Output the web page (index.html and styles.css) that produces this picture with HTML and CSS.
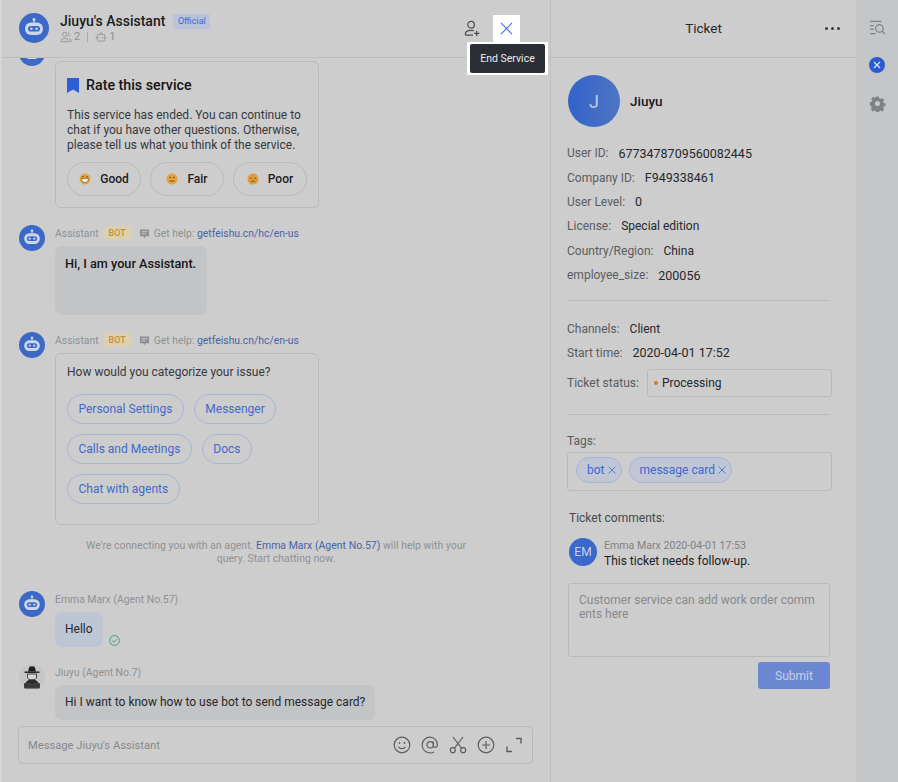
FILE: index.html
```html
<!DOCTYPE html>
<html lang="en">
<head>
  <meta charset="UTF-8">
  <title>Jiuyu's Assistant - Ticket</title>
  <link rel="stylesheet" href="styles.css">
</head>
<body>
  <svg class="defs" width="0" height="0">
    <symbol id="robot" viewBox="0 0 30 30">
      <circle cx="15" cy="15" r="15" fill="#3c69c6"/>
      <circle cx="15" cy="6.600" r="1.500" fill="#cdd6ea"/>
      <rect x="14.400" y="7" width="1.200" height="3" fill="#cdd6ea"/>
      <rect x="6" y="9.500" width="18" height="12.500" rx="6" fill="#cdd6ea"/>
      <rect x="9" y="13" width="12" height="5.600" rx="2.800" fill="#3c69c6"/>
      <circle cx="12.400" cy="15.800" r="1.300" fill="#cdd6ea"/>
      <circle cx="17.600" cy="15.800" r="1.300" fill="#cdd6ea"/>
    </symbol>
    <symbol id="help" viewBox="0 0 12 12">
      <path d="M1 1.500h10v7.500H7.500L6 11 4.500 9H1z" fill="#8f9194"/>
      <path d="M3 4h6M3 6.200h4" stroke="#cdcdcd" stroke-width="1"/>
    </symbol>
  </svg>

  <div class="app">
    <section class="chat">
      <header class="chat-head">
        <svg class="head-avatar"><use href="#robot"/></svg>
        <div class="head-info">
          <div class="head-title">
            <span class="head-name">Jiuyu's Assistant</span>
            <span class="tag-official">Official</span>
          </div>
          <div class="head-sub">
            <svg class="sub-icon" viewBox="0 0 14 14" fill="none" stroke="#8f9194" stroke-width="1">
              <circle cx="5.500" cy="4" r="2.500"/>
              <path d="M1 12.500c0-2.600 2-4 4.500-4s4.500 1.400 4.500 4zM9 1.800a2.400 2.400 0 0 1 0 4.500M10.800 8.800c1.400.5 2.200 1.800 2.200 3.700h-1.500"/>
            </svg>
            <span>2</span>
            <i class="sub-sep"></i>
            <svg class="sub-icon" viewBox="0 0 14 14" fill="none" stroke="#8f9194" stroke-width="1">
              <path d="M7 1v2.500"/>
              <rect x="2.500" y="3.800" width="9" height="8" rx="2"/>
              <path d="M.5 7.800h2M11.500 7.800h2M5 7v1.500M9 7v1.500"/>
            </svg>
            <span>1</span>
          </div>
        </div>
        <div class="head-actions">
          <svg class="add-user" viewBox="0 0 18 18" fill="none" stroke="#4a4c50" stroke-width="1.300">
            <circle cx="7.500" cy="5" r="3.500"/>
            <path d="M1.500 16v-1.500c0-2.200 2-3.500 6-3.500 1 0 2 .1 2.800.3M1.500 16h8M13.500 11.500v5.500M10.800 14.200h5.400"/>
          </svg>
          <span class="end-btn">
            <svg viewBox="0 0 14 14" fill="none" stroke="#3a6fe8" stroke-width="1.100"><path d="M1 1l12 12M13 1L1 13"/></svg>
          </span>
        </div>
        <div class="tooltip"><span>End Service</span></div>
      </header>

      <div class="messages">
        <div class="msg">
          <svg class="msg-avatar"><use href="#robot"/></svg>
          <div class="msg-body">
            <div class="meta"></div>
            <div class="card card-rate">
              <h3 class="card-title">
                <svg class="bookmark" viewBox="0 0 12 15"><path d="M0 0h12v15L6 11.500 0 15z" fill="#2f5fd6"/></svg>
                Rate this service
              </h3>
              <p class="card-text">This service has ended. You can continue to chat if you have other questions. Otherwise, please tell us what you think of the service.</p>
              <div class="rate-btns">
                <button class="rate-btn">
                  <svg class="emoji" viewBox="0 0 12 12"><circle cx="6" cy="6" r="5.500" fill="#e6a23c"/><path d="M2.500 5.500h7C9.500 8 8 9.500 6 9.500S2.500 8 2.500 5.500z" fill="#f4efe6" stroke="#6b4a20" stroke-width=".6"/><path d="M3 3.800h1.800M7.200 3.800H9" stroke="#6b4a20" stroke-width=".9"/></svg>
                  Good
                </button>
                <button class="rate-btn">
                  <svg class="emoji" viewBox="0 0 12 12"><circle cx="6" cy="6" r="5.500" fill="#e6a23c"/><path d="M3.500 8h5" stroke="#6b4a20" stroke-width=".9"/><circle cx="4" cy="4.500" r=".8" fill="#6b4a20"/><circle cx="8" cy="4.500" r=".8" fill="#6b4a20"/></svg>
                  Fair
                </button>
                <button class="rate-btn">
                  <svg class="emoji" viewBox="0 0 12 12"><circle cx="6" cy="6" r="5.500" fill="#e09a3a"/><path d="M4 8.800c1-1 3-1 4 0" fill="none" stroke="#6b4a20" stroke-width=".9"/><path d="M3 5l1.600.5M9 5l-1.600.5" stroke="#6b4a20" stroke-width=".9"/></svg>
                  Poor
                </button>
              </div>
            </div>
          </div>
        </div>

        <div class="msg">
          <svg class="msg-avatar"><use href="#robot"/></svg>
          <div class="msg-body">
            <div class="meta">
              <span>Assistant</span><span class="tag-bot">BOT</span>
              <svg class="help-icon"><use href="#help"/></svg>
              <span>Get help: <span class="meta-link">getfeishu.cn/hc/en-us</span></span>
            </div>
            <div class="bubble bubble-intro">Hi, I am your Assistant.</div>
          </div>
        </div>

        <div class="msg msg-topics">
          <svg class="msg-avatar"><use href="#robot"/></svg>
          <div class="msg-body">
            <div class="meta">
              <span>Assistant</span><span class="tag-bot">BOT</span>
              <svg class="help-icon"><use href="#help"/></svg>
              <span>Get help: <span class="meta-link">getfeishu.cn/hc/en-us</span></span>
            </div>
            <div class="card card-topics">
              <p class="card-text">How would you categorize your issue?</p>
              <div class="pills">
                <span class="pill">Personal Settings</span>
                <span class="pill">Messenger</span>
                <span class="pill">Calls and Meetings</span>
                <span class="pill">Docs</span>
                <span class="pill">Chat with agents</span>
              </div>
            </div>
          </div>
        </div>

        <p class="system-note">We're connecting you with an agent. <span class="meta-link">Emma Marx (Agent No.57)</span> will help with your query. Start chatting now.</p>

        <div class="msg msg-agent">
          <svg class="msg-avatar"><use href="#robot"/></svg>
          <div class="msg-body">
            <div class="meta"><span>Emma Marx (Agent No.57)</span></div>
            <div class="bubble-row">
              <div class="bubble bubble-blue">Hello</div>
              <svg class="read-icon" viewBox="0 0 12 12" fill="none" stroke="#2f9e78" stroke-width="1"><circle cx="6" cy="6" r="5.300"/><path d="M3.400 6l1.900 1.900 3.300-3.400"/></svg>
            </div>
          </div>
        </div>

        <div class="msg msg-user">
          <svg class="msg-avatar" viewBox="0 0 26 26">
            <circle cx="13" cy="13" r="13" fill="#c6c6c6"/>
            <path d="M9 7.500L10.500 2.500h5L17 7.500z" fill="#1d1d1f"/>
            <path d="M5.500 7.500h15v1.400h-15z" fill="#1d1d1f"/>
            <path d="M8.500 10h9v3c0 1.800-2 3-4.500 3s-4.500-1.200-4.500-3z" fill="#d8d8d8" stroke="#1d1d1f" stroke-width=".8"/>
            <path d="M5.500 24.500c0-6 2.500-9 7.500-9s7.500 3 7.500 9z" fill="#2a2a2c"/>
            <rect x="5" y="19" width="16" height="5" rx="1" fill="#3b3b3e"/>
          </svg>
          <div class="msg-body">
            <div class="meta"><span>Jiuyu (Agent No.7)</span></div>
            <div class="bubble">Hi I want to know how to use bot to send message card?</div>
          </div>
        </div>
      </div>

      <div class="composer">
        <span class="composer-hint">Message Jiuyu's Assistant</span>
        <div class="composer-tools">
          <svg viewBox="0 0 18 18" fill="none" stroke="#5c5e62" stroke-width="1.200"><circle cx="9" cy="9" r="7.800"/><path d="M5.500 10.800c1.800 2.400 5.200 2.400 7 0"/><circle cx="6.500" cy="7" r=".9" fill="#5c5e62" stroke="none"/><circle cx="11.500" cy="7" r=".9" fill="#5c5e62" stroke="none"/></svg>
          <svg viewBox="0 0 18 18" fill="none" stroke="#5c5e62" stroke-width="1.200"><circle cx="9.200" cy="8.800" r="3.200"/><path d="M12.400 5.600v4.200c0 2.400 3.800 2.200 4-.6.300-4.400-3-8-7.400-8a7.900 7.900 0 0 0 0 15.800c1.500 0 2.800-.3 4-1"/></svg>
          <svg viewBox="0 0 18 18" fill="none" stroke="#5c5e62" stroke-width="1.200"><circle cx="3.800" cy="14.200" r="2.500"/><circle cx="14.200" cy="14.200" r="2.500"/><path d="M5.300 12.300L14 1M12.700 12.300L4 1"/></svg>
          <svg viewBox="0 0 18 18" fill="none" stroke="#5c5e62" stroke-width="1.200"><circle cx="9" cy="9" r="7.800"/><path d="M9 5v8M5 9h8"/></svg>
          <svg viewBox="0 0 18 18" fill="none" stroke="#5c5e62" stroke-width="1.400"><path d="M11 2.500h5v5M2 10.500v5h5"/></svg>
        </div>
      </div>
    </section>

    <section class="ticket">
      <header class="ticket-head">
        <span class="ticket-title">Ticket</span>
        <span class="ticket-more"><i></i><i></i><i></i></span>
      </header>

      <div class="ticket-body">
        <div class="user-card">
          <span class="user-avatar">J</span>
          <span class="user-name">Jiuyu</span>
        </div>

        <div class="fields">
          <div class="field"><span class="field-label">User ID:</span><span class="field-num">6773478709560082445</span></div>
          <div class="field"><span class="field-label">Company ID:</span><span class="field-num">F949338461</span></div>
          <div class="field"><span class="field-label">User Level:</span><span class="field-num">0</span></div>
          <div class="field"><span class="field-label">License:</span><span>Special edition</span></div>
          <div class="field"><span class="field-label">Country/Region:</span><span>China</span></div>
          <div class="field"><span class="field-label">employee_size:</span><span class="field-num">200056</span></div>
        </div>

        <hr class="divider">

        <div class="fields fields-service">
          <div class="field"><span class="field-label">Channels:</span><span>Client</span></div>
          <div class="field"><span class="field-label">Start time:</span><span class="field-num">2020-04-01 17:52</span></div>
          <div class="field field-status">
            <span class="field-label">Ticket status:</span>
            <span class="status-box"><i class="status-dot"></i>Processing</span>
          </div>
        </div>

        <hr class="divider divider-tags">

        <div class="tags-label">Tags:</div>
        <div class="tags-box">
          <span class="tag">bot<svg viewBox="0 0 8 8" fill="none" stroke="#3f68d0" stroke-width=".8"><path d="M.5.500l7 7M7.500.500l-7 7"/></svg></span>
          <span class="tag">message card<svg viewBox="0 0 8 8" fill="none" stroke="#3f68d0" stroke-width=".8"><path d="M.5.500l7 7M7.500.500l-7 7"/></svg></span>
        </div>

        <div class="comments-label">Ticket comments:</div>
        <div class="comment">
          <span class="comment-avatar">EM</span>
          <div>
            <div class="comment-meta">Emma Marx 2020-04-01 17:53</div>
            <div class="comment-text">This ticket needs follow-up.</div>
          </div>
        </div>

        <div class="comment-input">Customer service can add work order comments here</div>
        <div class="submit-row"><button class="submit">Submit</button></div>
      </div>
    </section>

    <aside class="rail">
      <svg class="rail-icon" viewBox="0 0 18 18" fill="none" stroke="#808285" stroke-width="1.300">
        <path d="M1 2.500h12M1 7h4M1 11h4M1 15.500h6"/>
        <circle cx="11" cy="10" r="4"/>
        <path d="M14 13l3 3"/>
      </svg>
      <span class="rail-close">
        <svg viewBox="0 0 8 8" fill="none" stroke="#dfe6f5" stroke-width="1.200"><path d="M1 1l6 6M7 1L1 7"/></svg>
      </span>
      <svg class="rail-icon" viewBox="0 0 18 18">
        <path fill="#808285" fill-rule="evenodd" d="M7.400.8h3.200l.5 2.300 1.500.7 2-1.200 2.200 2.300-1.200 2 .6 1.500 2.300.5v3.200l-2.300.5-.6 1.500 1.200 2-2.200 2.200-2-1.200-1.500.6-.5 2.300H7.400l-.5-2.300-1.500-.6-2 1.200-2.300-2.200 1.200-2-.6-1.500L-.1 10.600V7.400l2.300-.5.600-1.500-1.200-2 2.300-2.300 2 1.200 1.500-.7zM9 6a3 3 0 1 0 0 6 3 3 0 0 0 0-6z" transform="translate(.9 .9) scale(.9)"/>
      </svg>
    </aside>
  </div>
</body>
</html>
```

FILE: styles.css
```css
/* Reset and base */
* {
  box-sizing: border-box;
  margin: 0;
  padding: 0;
}

html,
body {
  height: 100%;
}

body {
  font-family: Roboto, "Liberation Sans", sans-serif;
  font-size: 12px;
  color: #1e2023;
  background: #cdcdcd;
  overflow: hidden;
}

.defs {
  position: absolute;
}

.app {
  display: flex;
  height: 782px;
  border-left: 2px solid #d6d6d6;
}

/* Chat column */
.chat {
  width: 549px;
  display: flex;
  flex-direction: column;
  border-right: 1px solid #bfbfbf;
}

.chat-head {
  position: relative;
  z-index: 2;
  flex: none;
  height: 58px;
  display: flex;
  align-items: flex-start;
  padding: 13px 30px 0 17px;
  border-bottom: 1px solid #bdbdbd;
  background: #cdcdcd;
}

.head-avatar {
  width: 30px;
  height: 30px;
  flex: none;
}

.head-info {
  margin-left: 11px;
}

.head-title {
  display: flex;
  align-items: center;
  height: 16px;
}

.head-name {
  font-size: 14px;
  font-weight: 500;
  color: #1b1c1f;
}

.tag-official {
  margin-left: 8px;
  padding: 0 4.500px;
  height: 15px;
  line-height: 15px;
  font-size: 9px;
  color: #3f68d0;
  background: #b9c4dc;
  border-radius: 2px;
}

.head-sub {
  display: flex;
  align-items: center;
  gap: 2px;
  margin-top: 1px;
  font-size: 11px;
  line-height: 14px;
  color: #8f9194;
}

.sub-icon {
  width: 12px;
  height: 12px;
}

.sub-sep {
  width: 1px;
  height: 10px;
  margin: 0 5px;
  background: #a9a9a9;
}

.head-actions {
  margin-left: auto;
  display: flex;
  align-items: center;
  gap: 12px;
  margin-top: 2px;
}

.add-user {
  width: 17px;
  height: 17px;
}

.end-btn {
  width: 27px;
  height: 27px;
  display: flex;
  align-items: center;
  justify-content: center;
  background: #ffffff;
}

.end-btn svg {
  width: 13px;
  height: 13px;
}

.tooltip {
  position: absolute;
  left: 465px;
  top: 42px;
  width: 81px;
  height: 33px;
  padding: 2px 3px;
  background: #ffffff;
}

.tooltip span {
  display: block;
  height: 29px;
  line-height: 29px;
  text-align: center;
  font-size: 10.500px;
  color: #eceded;
  background: #2b2e35;
  border-radius: 2px;
}

/* Messages, pinned to the bottom like a scrolled chat */
.messages {
  flex: 1;
  min-height: 0;
  overflow: hidden;
  display: flex;
  flex-direction: column;
  justify-content: flex-end;
  padding: 0 17px 6px;
}

.msg {
  flex: none;
  display: flex;
  gap: 10px;
  margin-bottom: 17px;
}

.msg-topics {
  margin-bottom: 14px;
}

.msg-user {
  margin-bottom: 0;
}

.msg-avatar {
  width: 26px;
  height: 26px;
  flex: none;
}

.meta {
  display: flex;
  align-items: center;
  height: 16px;
  margin-bottom: 5px;
  font-size: 10.400px;
  color: #8f9194;
}

.meta-link {
  color: #4b62a8;
}

.tag-bot {
  margin: 0 8px 0 5px;
  padding: 0 5px;
  height: 14px;
  line-height: 14px;
  font-size: 9px;
  font-weight: 500;
  color: #c98f2c;
  background: #dcd0b2;
  border-radius: 2px;
}

.help-icon {
  width: 11px;
  height: 11px;
  margin-right: 4px;
}

.bubble-row {
  display: flex;
  align-items: flex-end;
}

.bubble {
  display: inline-block;
  height: 35px;
  padding: 0 10px;
  line-height: 35px;
  color: #26282c;
  background: #c3c4c6;
  border-radius: 7px;
}

.bubble-intro {
  display: block;
  width: 152px;
  height: 69px;
  line-height: 36px;
  font-size: 12.700px;
  font-weight: 500;
  color: #16171a;
}

.bubble-blue {
  background: #bec5d4;
}

.read-icon {
  width: 11px;
  height: 11px;
  margin: 0 0 1px 6px;
}

.card {
  width: 264px;
  border: 1px solid #bababa;
  border-radius: 6px;
  padding: 11px;
}

.card-rate {
  padding-top: 14px;
  height: 147px;
}

.card-topics {
  height: 172px;
}

.card-title {
  display: flex;
  align-items: center;
  gap: 7px;
  font-size: 14.250px;
  line-height: 18px;
  font-weight: 500;
  color: #131417;
}

.bookmark {
  width: 12px;
  height: 15px;
}

.card-text {
  line-height: 15px;
  color: #37393d;
}

.card-rate .card-text {
  margin-top: 14px;
}

.rate-btns {
  display: flex;
  gap: 9px;
  margin-top: 9px;
}

.rate-btn {
  flex: 1;
  height: 34px;
  display: flex;
  align-items: center;
  justify-content: center;
  gap: 9px;
  font: 500 12px Roboto, "Liberation Sans", sans-serif;
  color: #1e2023;
  background: transparent;
  border: 1px solid #bababa;
  border-radius: 17px;
}

.emoji {
  width: 12px;
  height: 12px;
}

.pills {
  display: flex;
  flex-wrap: wrap;
  gap: 10px;
  margin-top: 14px;
}

.pill {
  height: 30px;
  line-height: 28px;
  padding: 0 10.500px;
  color: #3f68d0;
  border: 1px solid #a7b6d8;
  border-radius: 15px;
}

.system-note {
  flex: none;
  margin: 0 auto 26px;
  width: 392px;
  text-align: center;
  font-size: 10.500px;
  line-height: 13px;
  color: #8f9194;
}

.composer {
  flex: none;
  height: 38px;
  margin: 0 17px 18px 16px;
  padding: 0 9px;
  display: flex;
  align-items: center;
  justify-content: space-between;
  border: 1px solid #bababa;
  border-radius: 4px;
}

.composer-hint {
  font-size: 11.200px;
  color: #88898c;
}

.composer-tools {
  display: flex;
  gap: 10px;
}

.composer-tools svg {
  width: 18px;
  height: 18px;
}

/* Ticket column */
.ticket {
  width: 305px;
  display: flex;
  flex-direction: column;
}

.ticket-head {
  position: relative;
  flex: none;
  height: 58px;
  line-height: 57px;
  text-align: center;
  border-bottom: 1px solid #bdbdbd;
}

.ticket-title {
  font-size: 13.500px;
  color: #26282c;
}

.ticket-more {
  position: absolute;
  right: 16px;
  top: 27px;
  display: flex;
  gap: 3px;
}

.ticket-more i {
  width: 3px;
  height: 3px;
  border-radius: 50%;
  background: #3a3c40;
}

.ticket-body {
  padding: 17px 24px 0 16px;
}

.user-card {
  display: flex;
  align-items: center;
  gap: 10px;
  margin-left: 1px;
}

.user-avatar {
  width: 52px;
  height: 52px;
  display: flex;
  align-items: center;
  justify-content: center;
  border-radius: 50%;
  font-size: 18px;
  color: #c0cbe4;
  background: linear-gradient(90deg, #3263ca, #4e75c4);
}

.user-name {
  font-size: 13.500px;
  font-weight: 500;
  color: #16171a;
}

.fields {
  margin-top: 14px;
}

.field {
  display: flex;
  align-items: center;
  height: 24.400px;
  color: #26282c;
}

.field-num {
  font-size: 12.500px;
}

.field-label {
  flex: none;
  margin-right: 10px;
  color: #5a5c60;
}

.divider {
  height: 1px;
  margin: 13px 2px 0 1px;
  border: none;
  background: #bcbcbc;
}

.fields-service {
  margin-top: 15px;
}

.field-status {
  height: 28px;
  margin-top: 4px;
}

.field-status .field-label {
  margin-right: 8px;
}

.status-box {
  flex: 1;
  height: 28px;
  display: flex;
  align-items: center;
  padding-left: 6px;
  border: 1px solid #bababa;
  border-radius: 3px;
}

.status-dot {
  width: 4px;
  height: 4px;
  margin-right: 4px;
  border-radius: 50%;
  background: #d9771f;
}

.divider-tags {
  margin-top: 17px;
}

.tags-label {
  margin-top: 18px;
  line-height: 16px;
  color: #5a5c60;
}

.tags-box {
  display: flex;
  gap: 7px;
  height: 39px;
  margin-top: 3px;
  padding: 4px 8px;
  border: 1px solid #bababa;
  border-radius: 3px;
}

.tag {
  display: flex;
  align-items: center;
  gap: 3px;
  height: 26px;
  padding: 0 5px 0 10px;
  color: #3f68d0;
  background: #c0c6d3;
  border: 1px solid #a7b6d8;
  border-radius: 13px;
}

.tag svg {
  width: 8px;
  height: 8px;
}

.comments-label {
  margin: 19px 0 0 2px;
  line-height: 16px;
  color: #46484c;
}

.comment {
  display: flex;
  gap: 7px;
  margin: 12px 0 0 2px;
}

.comment-avatar {
  width: 28px;
  height: 28px;
  flex: none;
  display: flex;
  align-items: center;
  justify-content: center;
  border-radius: 50%;
  font-size: 12px;
  color: #c8d2e8;
  background: #3a68cb;
}

.comment-meta {
  font-size: 10.600px;
  line-height: 15px;
  color: #808285;
}

.comment-text {
  line-height: 16px;
  color: #1e2023;
}

.comment-input {
  height: 74px;
  margin: 14px 2px 0 1px;
  padding: 9px 11px 9px 10px;
  line-height: 14px;
  word-break: break-all;
  color: #88898c;
  border: 1px solid #bababa;
  border-radius: 3px;
}

.submit-row {
  display: flex;
  justify-content: flex-end;
  margin: 5px 2px 0 0;
}

.submit {
  width: 72px;
  height: 27px;
  font: 12px Roboto, "Liberation Sans", sans-serif;
  color: #c6d0e6;
  background: #6b87d2;
  border: none;
  border-radius: 3px;
}

/* Right rail */
.rail {
  flex: 1;
  display: flex;
  flex-direction: column;
  align-items: center;
  padding-top: 19px;
  background: #c5c6c8;
}

.rail-icon {
  width: 17px;
  height: 17px;
}

.rail-close {
  width: 16px;
  height: 16px;
  margin: 21px 0 22px;
  display: flex;
  align-items: center;
  justify-content: center;
  border-radius: 50%;
  background: #2b5bd0;
}

.rail-close svg {
  width: 8px;
  height: 8px;
}
```
